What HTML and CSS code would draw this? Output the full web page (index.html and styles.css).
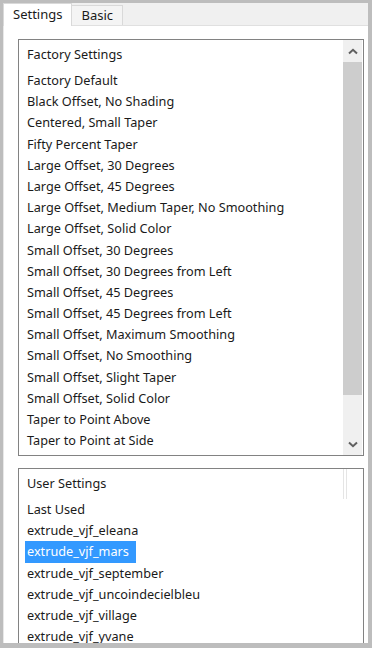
FILE: index.html
```html
<!DOCTYPE html>
<html lang="en">
<head>
    <meta charset="UTF-8">
    <title>Presets</title>
    <link rel="stylesheet" href="styles.css">
</head>
<body>

    <div class="window">
        <div class="tab-strip">
            <div class="tab active">Settings</div>
            <div class="tab">Basic</div>
        </div>

        <div class="panel">
            <div class="list-box factory">
                <div class="list">
                    <div class="list-header">Factory Settings</div>
                    <div class="item">Factory Default</div>
                    <div class="item">Black Offset, No Shading</div>
                    <div class="item">Centered, Small Taper</div>
                    <div class="item">Fifty Percent Taper</div>
                    <div class="item">Large Offset, 30 Degrees</div>
                    <div class="item">Large Offset, 45 Degrees</div>
                    <div class="item">Large Offset, Medium Taper, No Smoothing</div>
                    <div class="item">Large Offset, Solid Color</div>
                    <div class="item">Small Offset, 30 Degrees</div>
                    <div class="item">Small Offset, 30 Degrees from Left</div>
                    <div class="item">Small Offset, 45 Degrees</div>
                    <div class="item">Small Offset, 45 Degrees from Left</div>
                    <div class="item">Small Offset, Maximum Smoothing</div>
                    <div class="item">Small Offset, No Smoothing</div>
                    <div class="item">Small Offset, Slight Taper</div>
                    <div class="item">Small Offset, Solid Color</div>
                    <div class="item">Taper to Point Above</div>
                    <div class="item">Taper to Point at Side</div>
                </div>
                <div class="scrollbar">
                    <div class="scroll-btn">
                        <svg width="10" height="7" viewBox="0 0 10 7"><path d="M1 5.5 L5 1.8 L9 5.5" fill="none" stroke="#606060" stroke-width="2"/></svg>
                    </div>
                    <div class="track">
                        <div class="thumb"></div>
                    </div>
                    <div class="scroll-btn">
                        <svg width="10" height="7" viewBox="0 0 10 7"><path d="M1 1.5 L5 5.2 L9 1.5" fill="none" stroke="#606060" stroke-width="2"/></svg>
                    </div>
                </div>
            </div>

            <div class="list-box user">
                <div class="list">
                    <div class="list-header">User Settings</div>
                    <div class="item">Last Used</div>
                    <div class="item">extrude_vjf_eleana</div>
                    <div class="item"><span class="selected">extrude_vjf_mars</span></div>
                    <div class="item">extrude_vjf_september</div>
                    <div class="item">extrude_vjf_uncoindecielbleu</div>
                    <div class="item">extrude_vjf_village</div>
                    <div class="item">extrude_vjf_yvane</div>
                </div>
                <div class="header-divider"></div>
            </div>
        </div>
    </div>

</body>
</html>
```

FILE: styles.css
```css
html, body {
    margin: 0;
    height: 100%;
}

body {
    font-family: "Noto Sans", Arial, sans-serif;
    font-size: 12.7px;
    color: #1a1a1a;
    background: #bdbdbd;
    padding: 3px 4px 5px 3px;
    box-sizing: border-box;
    overflow: hidden;
}

.window {
    height: 100%;
    display: flex;
    flex-direction: column;
    background: #f0f0f0;
}

.tab-strip {
    height: 22px;
    display: flex;
    align-items: flex-end;
    border-bottom: 1px solid #e0e0e0;
    background: #f0f0f0;
}

.tab {
    height: 19px;
    padding: 0 9px 0 9px;
    line-height: 19px;
    font-size: 13px;
    background: #f4f4f4;
    border: 1px solid #d9d9d9;
    border-bottom: none;
    margin-left: -1px;
}

.tab.active {
    height: 22px;
    line-height: 20px;
    background: #fff;
    border-color: #d9d9d9;
    padding: 0 9px 0 9px;
    margin-left: 0;
    margin-bottom: -1px;
    position: relative;
}

.panel {
    flex: 1;
    background: #fff;
    border-left: 1px solid #e8e8e8;
    padding: 13px 4px 0 14px;
    overflow: hidden;
    display: flex;
    flex-direction: column;
    gap: 12px;
}

.list-box {
    border: 1px solid #828282;
    display: flex;
    position: relative;
    flex-shrink: 0;
}

.list-box.factory {
    height: 415px;
}

.list-box.user {
    height: 200px;
}

.list {
    flex: 1;
    padding: 4px 0 0 6px;
    overflow: hidden;
}

.list-header {
    line-height: 21px;
    padding-left: 2px;
    margin-bottom: 5px;
}

.item {
    line-height: 21.2px;
    height: 21.2px;
    padding-left: 2px;
    white-space: nowrap;
}

.selected {
    display: inline-block;
    background: #3399ff;
    color: #fff;
    margin-left: -2px;
    padding: 0 7px 0 2px;
}

.scrollbar {
    width: 19px;
    margin-right: 1px;
    display: flex;
    flex-direction: column;
    background: #f0f0f0;
}

.scroll-btn {
    height: 22px;
    display: flex;
    align-items: center;
    justify-content: center;
}

.track {
    flex: 1;
    display: flex;
    flex-direction: column;
}

.thumb {
    height: 333px;
    background: #cdcdcd;
}

.header-divider {
    position: absolute;
    top: 0;
    right: 16px;
    width: 2px;
    height: 30px;
    border-left: 1px solid #e5e5e5;
    border-right: 1px solid #e5e5e5;
}
```
